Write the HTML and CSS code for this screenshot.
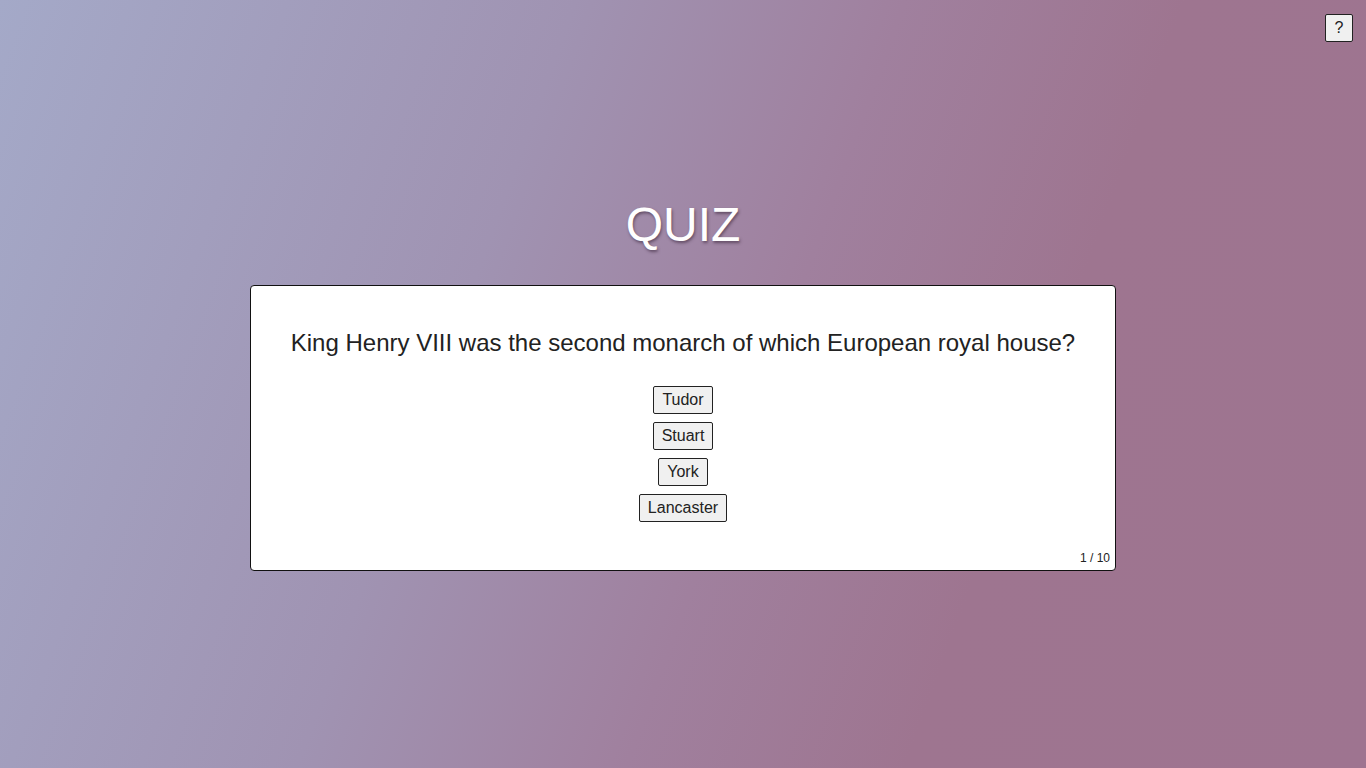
FILE: index.html
```html
<!DOCTYPE html>
<html lang="en">
<head>
<meta charset="utf-8">
<title>Quiz</title>
<link rel="stylesheet" href="styles.css">
</head>
<body>
<button class="help-btn" type="button">?</button>
<main class="page">
  <h1 class="title">QUIZ</h1>
  <section class="card">
    <h2 class="question">King Henry VIII was the second monarch of which European royal house?</h2>
    <div class="answers">
      <button class="answer" type="button">Tudor</button>
      <button class="answer" type="button">Stuart</button>
      <button class="answer" type="button">York</button>
      <button class="answer" type="button">Lancaster</button>
    </div>
    <span class="progress">1 / 10</span>
  </section>
</main>
</body>
</html>
```

FILE: styles.css
```css
* { box-sizing: border-box; }
html, body { height: 100%; }
body {
  margin: 0;
  font-family: "Liberation Sans", Arial, sans-serif;
  background: linear-gradient(110deg, #a4a9c8 0%, #a093b2 35%, #a0809e 55%, #9e7590 72%, #9e7490 100%);
  color: #222;
  overflow: hidden;
}
.help-btn {
  position: absolute;
  top: 14px;
  right: 13px;
  width: 28px;
  height: 28px;
  padding: 0;
  font-family: "Liberation Sans", Arial, sans-serif;
  font-size: 16px;
  color: #222;
  background: #f0f0f0;
  border: 1px solid #222;
  border-radius: 2px;
}
.page {
  height: 100%;
  display: flex;
  flex-direction: column;
  align-items: center;
  justify-content: center;
}
.title {
  margin: 0 0 33px;
  font-size: 48px;
  font-weight: 400;
  color: #fff;
  text-shadow: 1px 2px 3px rgba(40, 20, 40, 0.5);
}
.card {
  position: relative;
  width: 866px;
  height: 286px;
  background: #fff;
  border: 1px solid #111;
  border-radius: 4px;
  padding: 43px 20px 0;
  display: flex;
  flex-direction: column;
  align-items: center;
}
.question {
  margin: 0 0 29px;
  font-size: 24px;
  font-weight: 400;
  color: #222;
  text-align: center;
}
.answers {
  display: flex;
  flex-direction: column;
  align-items: center;
  gap: 8px;
}
.answer {
  font-family: "Liberation Sans", Arial, sans-serif;
  font-size: 16px;
  line-height: 18px;
  color: #222;
  padding: 4px 8px;
  background: #f0f0f0;
  border: 1px solid #222;
  border-radius: 2px;
}
.progress {
  position: absolute;
  right: 5px;
  bottom: 5px;
  font-size: 12px;
  color: #222;
}
```
